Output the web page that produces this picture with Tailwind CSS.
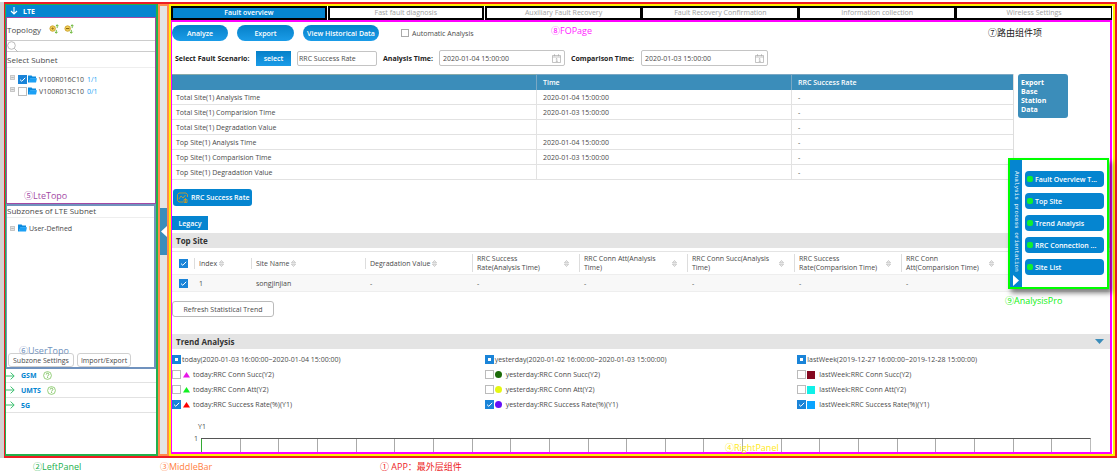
<!DOCTYPE html>
<html lang="en">
<head>
<meta charset="utf-8">
<title>Fault overview</title>
<script src="https://cdn.jsdelivr.net/npm/@tailwindcss/browser@4"></script>
</head>
<body class="bg-white font-['Open_Sans','Noto_Sans_CJK_SC',sans-serif] text-[7px] leading-[9px] text-[#4a4a4a]">
<svg class="hidden">
  <symbol id="check" viewBox="0 0 9 9"><path d="M2 4.6 3.8 6.3 7.2 2.8" fill="none" stroke="#fff" stroke-width="1"/></symbol>
  <symbol id="folder" viewBox="0 0 9 8"><path d="M0 .5h3.600l.8 1H8v2H2.400L.8 7.500H0z" fill="#0b8ade"/><path d="M2.200 3.200H9L8 7.600H.7z" fill="#1ba0f5"/></symbol>
  <symbol id="plus" viewBox="0 0 6 6"><path d="M.5.5h5v5h-5z" fill="#e4e4e4" stroke="#aaa" stroke-width=".8"/><path d="M1.500 3h3" stroke="#999" stroke-width=".7"/></symbol>
  <symbol id="sort" viewBox="0 0 5 7"><path d="M.4 2.8 2.5.5l2.1 2.3zM.4 4.2l2.1 2.3 2.1-2.3z" fill="#eee" stroke="#b0b0b0" stroke-width=".6"/></symbol>
  <symbol id="cal" viewBox="0 0 9 9"><path d="M.5 1.5h8v7h-8zM.5 3h8M2.5.2v2M6.5.2v2M3.8 5l1-.6v3M3.8 7.4h2" fill="none" stroke="#aaa" stroke-width=".7"/></symbol>
  <symbol id="arrow" viewBox="0 0 9 8"><path d="M0 4h8M4.6.6 8.2 4 4.6 7.4" fill="none" stroke="#3cc070" stroke-width="1"/></symbol>
  <symbol id="help" viewBox="0 0 9 9"><circle cx="4.5" cy="4.5" r="3.9" fill="#fff" stroke="#7cc45c" stroke-width=".8"/><path d="M3.2 3.5c0-1.7 2.7-1.7 2.7 0 0 .9-1.3.9-1.3 2M4.6 6.1v.9" fill="none" stroke="#6db84c" stroke-width=".9"/></symbol>
  <symbol id="tri" viewBox="0 0 7 6"><path d="M3.5 0 7 5.5H0z" fill="currentColor"/></symbol>
</svg>
<div class="relative">
  <div class="flex pt-[2px]">
    <div class="w-[4px] shrink-0 bg-[#d4d2d2]"></div>
    <div class="mr-px flex min-w-0 flex-1 border-2 border-l border-[#ed1c24]">

      <aside class="flex w-[153px] shrink-0 flex-col border border-r-2 border-b-2 border-[#22b14c]">
        <h2 class="flex h-[12px] items-center gap-[5px] bg-[#0585d0] pl-[4px] text-[7px] font-bold text-white">
          <svg class="size-[8px]" viewBox="0 0 8 8"><path d="M4 0v7M1 4l3 3 3-3" fill="none" stroke="#fff" stroke-width="1.1"/></svg>LTE</h2>
        <section class="flex h-[187px] flex-col border border-[#a349a4]">
          <div class="flex h-[22px] items-center text-[8px]">
            <span class="mr-[8px]">Topology</span>
            <button aria-label="Expand all" class="mr-[5px]"><svg class="size-[10px]" viewBox="0 0 11 11"><circle cx="4" cy="5" r="3" fill="#f4d15a" stroke="#c9a02c"/><path d="M2.500 5h3M4 3.500v3" stroke="#8a6410" stroke-width=".7"/><path d="M9 4.500V1M7.500 2.400 9 .8l1.500 1.600M8 6.500V10M6.500 8.600 8 10.200l1.500-1.600" fill="none" stroke="#63b32e" stroke-width="1"/></svg></button>
            <button aria-label="Collapse all"><svg class="size-[10px]" viewBox="0 0 11 11"><circle cx="4" cy="5" r="3" fill="#f4d15a" stroke="#c9a02c"/><path d="M2.200 5h3.600" stroke="#8a6410" stroke-width="1.200"/><path d="M9 4.500V1M7.500 2.400 9 .8l1.500 1.600M8 6.500V10M6.500 8.600 8 10.200l1.500-1.600" fill="none" stroke="#63b32e" stroke-width="1"/></svg></button>
          </div>
          <label class="flex h-[12px] items-center border-y border-[#ccc]">
            <svg class="size-[11px] shrink-0" viewBox="0 0 11 11"><circle cx="4.500" cy="4.500" r="3.800" fill="none" stroke="#aaa" stroke-width=".8"/><path d="m7.300 7.300 3.400 3.400" stroke="#aaa" stroke-width=".8"/></svg>
            <input aria-label="Search" class="h-full min-w-0 flex-1 outline-none">
          </label>
          <h3 class="flex h-[16px] items-center border-b border-[#eee] text-[8px]">Select Subnet</h3>
          <ul class="mt-[5px]">
            <li class="flex h-[12px] items-center"><svg class="mx-[3px] mb-[3px] size-[5px]"><use href="#plus"/></svg><label class="flex items-center gap-px"><span class="grid"><input type="checkbox" checked class="col-start-1 row-start-1 size-[9px] appearance-none bg-[#1a84d8]"><svg class="pointer-events-none col-start-1 row-start-1 size-[9px]"><use href="#check"/></svg></span><svg class="mr-px h-[8px] w-[9px]"><use href="#folder"/></svg>V100R016C10</label><span class="ml-[3px] text-[#1ba0f5]">1/1</span></li>
            <li class="flex h-[12px] items-center"><svg class="mx-[3px] mb-[3px] size-[5px]"><use href="#plus"/></svg><label class="flex items-center gap-px"><input type="checkbox" class="size-[9px] appearance-none border border-[#bbb] bg-white"><svg class="mr-px h-[8px] w-[9px]"><use href="#folder"/></svg>V100R013C10</label><span class="ml-[3px] text-[#1ba0f5]">0/1</span></li>
          </ul>
        </section>
        <section class="flex h-[165px] flex-col border-2 border-l border-[#7092be]">
          <h3 class="flex h-[12px] items-start border-b border-[#eee] text-[8px]">Subzones of LTE Subnet</h3>
          <div class="mt-[4px] flex h-[12px] items-center"><svg class="mr-[3px] ml-[3px] size-[5px]"><use href="#plus"/></svg><svg class="mr-[2px] h-[8px] w-[9px]"><use href="#folder"/></svg>User-Defined</div>
          <div class="mt-auto flex gap-[3px] pl-px">
            <button class="h-[14px] rounded-[3px] border border-[#d0d0d0] px-[4px]">Subzone Settings</button>
            <button class="h-[14px] rounded-[3px] border border-[#d0d0d0] px-[3px]">Import/Export</button>
          </div>
        </section>
        <nav class="font-bold text-[#0585d0]">
          <a href="#" class="flex h-[14px] items-center border-b border-[#e2e2e2]"><svg class="mr-[6px] h-[8px] w-[9px]"><use href="#arrow"/></svg>GSM<svg class="ml-[6px] size-[9px]"><use href="#help"/></svg></a>
          <a href="#" class="flex h-[15px] items-center border-b border-[#e2e2e2]"><svg class="mr-[6px] h-[8px] w-[9px]"><use href="#arrow"/></svg>UMTS<svg class="ml-[6px] size-[9px]"><use href="#help"/></svg></a>
          <a href="#" class="flex h-[15px] items-center border-b border-[#e2e2e2]"><svg class="mr-[6px] h-[8px] w-[9px]"><use href="#arrow"/></svg>5G</a>
        </nav>
      </aside>

      <div class="flex w-[11px] shrink-0 flex-col border-2 border-[#ff8a4a] bg-[#e4e4e4] pt-[202px]">
        <button aria-label="Collapse panel" class="flex h-[47px] items-center justify-center bg-[#3b8dba]"><svg class="h-[11px] w-[6px]" viewBox="0 0 6 11"><path d="M6 0v11L0 5.500z" fill="#fff"/></svg></button>
      </div>

      <main class="min-w-0 flex-1 border-2 border-[#fff200] pr-px">
        <nav class="grid h-[14px] grid-cols-6 text-center leading-[10px] text-[#a0a0a0]">
          <a href="#" class="mr-px border-2 border-black bg-[#0585d0] font-semibold text-white">Fault overview</a>
          <a href="#" class="mr-px border-2 border-black">Fast fault diagnosis</a>
          <a href="#" class="border-2 border-r border-black">Auxiliary Fault Recovery</a>
          <a href="#" class="border-2 border-r border-black">Fault Recovery Confirmation</a>
          <a href="#" class="border-2 border-r border-black">Information collection</a>
          <a href="#" class="border-2 border-r border-black">Wireless Settings</a>
        </nav>
        <div class="border-2 border-l border-[#ff00ff]">
          <div class="flex items-center pt-[3px] font-semibold text-white">
            <button class="mr-[9px] h-[16px] w-[56px] rounded-full bg-linear-to-b from-[#0580c8] to-[#1a9ce8]">Analyze</button>
            <button class="mr-[9px] h-[16px] w-[57px] rounded-full bg-linear-to-b from-[#0580c8] to-[#1a9ce8]">Export</button>
            <button class="mr-[22px] h-[16px] w-[76px] rounded-full bg-linear-to-b from-[#0580c8] to-[#1a9ce8]">View Historical Data</button>
            <label class="flex items-center gap-[3px] font-normal text-[#4a4a4a]"><input type="checkbox" class="size-[8px] appearance-none border border-[#aaa]">Automatic Analysis</label>
          </div>
          <div class="mt-[9px] flex items-center">
            <label for="scenario" class="w-[84px] pl-[3px] font-bold text-[#222]">Select Fault Scenario:</label>
            <button class="mr-[6px] h-[15px] w-[35px] bg-linear-to-b from-[#0580c8] to-[#1a9ce8] font-semibold text-white">select</button>
            <input id="scenario" value="RRC Success Rate" class="mr-[6px] h-[15px] w-[80px] rounded-[2px] border border-[#c4c4c4] px-px">
            <label for="at" class="w-[56px] font-bold text-[#222]">Analysis Time:</label>
            <span class="mr-[6px] flex h-[16px] w-[126px] items-center rounded-[2px] border border-[#c4c4c4] px-[3px]"><input id="at" value="2020-01-04 15:00:00" class="min-w-0 flex-1"><svg class="size-[9px]"><use href="#cal"/></svg></span>
            <label for="ct" class="w-[70px] font-bold text-[#222]">Comparison Time:</label>
            <span class="flex h-[16px] w-[127px] items-center rounded-[2px] border border-[#c4c4c4] px-[3px]"><input id="ct" value="2020-01-03 15:00:00" class="min-w-0 flex-1"><svg class="size-[9px]"><use href="#cal"/></svg></span>
          </div>
          <div class="mt-[8px] mr-[42px] flex items-start gap-[4px]">
            <table class="min-w-0 flex-1 table-fixed border-separate border-spacing-0 border-r border-[#ddd] text-left">
              <colgroup><col class="w-[364px]"><col class="w-[255px]"><col></colgroup>
              <thead><tr class="h-[16px] bg-[#3b8dba] font-semibold text-white"><th class="border-t border-[#8aa]"></th><th class="border-t border-l border-[#7aa8c4] pl-[6px] font-semibold">Time</th><th class="border-t border-l border-[#7aa8c4] pl-[6px] font-semibold">RRC Success Rate</th></tr></thead>
              <tbody class="[&_td]:h-[15px] [&_td]:border-b [&_td]:border-[#e2e2e2] [&_td]:p-0 [&_td]:pl-[6px] [&_td:first-child]:pl-[4px] [&_td+td]:border-l">
                <tr><td>Total Site(1) Analysis Time</td><td>2020-01-04 15:00:00</td><td>-</td></tr>
                <tr><td>Total Site(1) Comparision Time</td><td>2020-01-03 15:00:00</td><td>-</td></tr>
                <tr><td>Total Site(1) Degradation Value</td><td></td><td>-</td></tr>
                <tr><td>Top Site(1) Analysis Time</td><td>2020-01-04 15:00:00</td><td>-</td></tr>
                <tr><td>Top Site(1) Comparision Time</td><td>2020-01-03 15:00:00</td><td>-</td></tr>
                <tr><td>Top Site(1) Degradation Value</td><td></td><td>-</td></tr>
              </tbody>
            </table>
            <button class="h-[44px] w-[50px] rounded-[3px] bg-[#3b8dba] pr-[16px] pl-[3px] text-left font-bold text-white">Export Base Station Data</button>
          </div>
          <button class="mt-[9px] ml-px flex h-[17px] w-[79px] items-center gap-[3px] rounded-[3px] bg-[#0585d0] pl-[4px] font-semibold whitespace-nowrap text-white"><svg class="size-[11px] shrink-0" viewBox="0 0 11 11"><path d="M6 10H2L.5 8.500v-6L2 1h7l1.500 1.500V5M2 7l2-3 2 2 2.500-3M7 7.500h3v3H7zM8.500 6v4.500" fill="none" stroke="#c99a2c" stroke-width=".9"/></svg>RRC Success Rate</button>
          <button class="mt-[10px] block h-[14px] w-[36px] bg-[#0585d0] font-semibold text-white">Legacy</button>
          <h3 class="mt-[3px] flex h-[15px] items-center bg-[#e4e4e4] pl-[4px] text-[8px] font-bold text-[#333]">Top Site</h3>
          <table class="mt-[3px] w-full table-fixed border-separate border-spacing-0 border-t border-[#e4e4e4] text-left [&_td]:p-0 [&_td]:pl-[5px] [&_th]:p-0 [&_th]:font-normal">
            <colgroup><col class="w-[22px]"><col class="w-[57px]"><col class="w-[114px]"><col class="w-[107px]"><col class="w-[107px]"><col class="w-[108px]"><col class="w-[107px]"><col class="w-[107px]"><col class="w-[107px]"><col></colgroup>
            <thead><tr class="h-[22px]">
              <th><span class="ml-[7px] grid size-[9px]"><input aria-label="Select all sites" type="checkbox" checked class="col-start-1 row-start-1 size-[9px] appearance-none bg-[#1a84d8]"><svg class="pointer-events-none col-start-1 row-start-1 size-[9px]"><use href="#check"/></svg></span></th>
              <th><span class="flex h-[11px] items-center gap-[2px] border-l border-[#ddd] pl-[4px]">Index<svg class="h-[7px] w-[5px]"><use href="#sort"/></svg></span></th>
              <th><span class="flex h-[11px] items-center gap-[2px] border-l border-[#ddd] pl-[4px]">Site Name<svg class="h-[7px] w-[5px]"><use href="#sort"/></svg></span></th>
              <th><span class="flex h-[11px] items-center gap-[2px] border-l border-[#ddd] pl-[4px]">Degradation Value<svg class="h-[7px] w-[5px]"><use href="#sort"/></svg></span></th>
              <th><span class="flex items-center justify-between border-l border-[#ddd] pr-[10px] pl-[4px]"><span>RRC Success<br>Rate(Analysis Time)</span><svg class="h-[7px] w-[5px]"><use href="#sort"/></svg></span></th>
              <th><span class="flex items-center justify-between border-l border-[#ddd] pr-[10px] pl-[4px]"><span>RRC Conn Att(Analysis<br>Time)</span><svg class="h-[7px] w-[5px]"><use href="#sort"/></svg></span></th>
              <th><span class="flex items-center justify-between border-l border-[#ddd] pr-[10px] pl-[4px]"><span>RRC Conn Succ(Analysis<br>Time)</span><svg class="h-[7px] w-[5px]"><use href="#sort"/></svg></span></th>
              <th><span class="flex items-center justify-between border-l border-[#ddd] pr-[10px] pl-[4px]"><span>RRC Success<br>Rate(Comparision Time)</span><svg class="h-[7px] w-[5px]"><use href="#sort"/></svg></span></th>
              <th><span class="flex items-center justify-between border-l border-[#ddd] pr-[14px] pl-[4px]"><span>RRC Conn<br>Att(Comparision Time)</span><svg class="h-[7px] w-[5px]"><use href="#sort"/></svg></span></th>
              <th></th>
            </tr></thead>
            <tbody><tr class="h-[18px] bg-[#f8f8f8] [&_td]:border-y [&_td]:border-[#eee]">
              <td><span class="ml-[2px] grid size-[9px]"><input aria-label="Select site 1" type="checkbox" checked class="col-start-1 row-start-1 size-[9px] appearance-none bg-[#1a84d8]"><svg class="pointer-events-none col-start-1 row-start-1 size-[9px]"><use href="#check"/></svg></span></td>
              <td>1</td><td>songjinjian</td><td>-</td><td>-</td><td>-</td><td>-</td><td>-</td><td>-</td><td></td>
            </tr></tbody>
          </table>
          <button class="mt-[9px] block h-[16px] w-[102px] rounded-[3px] border border-[#bbb]">Refresh Statistical Trend</button>
          <h3 class="mt-[17px] flex h-[15px] items-center justify-between bg-[#e4e4e4] pr-[6px] pl-[4px] text-[8px] font-bold text-[#333]">Trend Analysis<svg class="h-[5px] w-[9px]" viewBox="0 0 9 5"><path d="M0 0h9L4.500 5z" fill="#3b8dba"/></svg></h3>
          <div class="mt-[3px] grid grid-cols-3 [&_label]:flex [&_label]:h-[15px] [&_label]:items-center">
            <div>
              <label><input type="checkbox" class="mr-px size-[9px] appearance-none border-3 border-[#1a84d8]">today(2020-01-03 16:00:00~2020-01-04 15:00:00)</label>
              <label><input type="checkbox" class="mr-[2px] size-[9px] appearance-none border border-[#bbb]"><svg class="mr-[3px] h-[6px] w-[7px] text-[#e815e8]"><use href="#tri"/></svg>today:RRC Conn Succ(Y2)</label>
              <label><input type="checkbox" class="mr-[2px] size-[9px] appearance-none border border-[#bbb]"><svg class="mr-[3px] h-[6px] w-[7px] text-[#10f020]"><use href="#tri"/></svg>today:RRC Conn Att(Y2)</label>
              <label><span class="mr-[2px] grid"><input type="checkbox" checked class="col-start-1 row-start-1 size-[9px] appearance-none bg-[#1a84d8]"><svg class="pointer-events-none col-start-1 row-start-1 size-[9px]"><use href="#check"/></svg></span><svg class="mr-[3px] h-[6px] w-[7px] text-[#ff0000]"><use href="#tri"/></svg>today:RRC Success Rate(%)(Y1)</label>
            </div>
            <div>
              <label><input type="checkbox" class="mr-px size-[9px] appearance-none border-3 border-[#1a84d8]">yesterday(2020-01-02 16:00:00~2020-01-03 15:00:00)</label>
              <label><input type="checkbox" class="mr-px size-[9px] appearance-none border border-[#bbb]"><i class="mr-[4px] size-[7px] rounded-full bg-[#1c6b08]"></i>yesterday:RRC Conn Succ(Y2)</label>
              <label><input type="checkbox" class="mr-px size-[9px] appearance-none border border-[#bbb]"><i class="mr-[4px] size-[7px] rounded-full bg-[#e6f712]"></i>yesterday:RRC Conn Att(Y2)</label>
              <label><span class="mr-px grid"><input type="checkbox" checked class="col-start-1 row-start-1 size-[9px] appearance-none bg-[#1a84d8]"><svg class="pointer-events-none col-start-1 row-start-1 size-[9px]"><use href="#check"/></svg></span><i class="mr-[4px] size-[7px] rounded-full bg-[#6610f8]"></i>yesterday:RRC Success Rate(%)(Y1)</label>
            </div>
            <div>
              <label><input type="checkbox" class="mr-px size-[9px] appearance-none border-3 border-[#1a84d8]">lastWeek(2019-12-27 16:00:00~2019-12-28 15:00:00)</label>
              <label><input type="checkbox" class="mr-px size-[9px] appearance-none border border-[#bbb]"><i class="mr-[4px] size-[8px] bg-[#850820]"></i>lastWeek:RRC Conn Succ(Y2)</label>
              <label><input type="checkbox" class="mr-px size-[9px] appearance-none border border-[#bbb]"><i class="mr-[4px] size-[8px] bg-[#10f0e8]"></i>lastWeek:RRC Conn Att(Y2)</label>
              <label><span class="mr-px grid"><input type="checkbox" checked class="col-start-1 row-start-1 size-[9px] appearance-none bg-[#1a84d8]"><svg class="pointer-events-none col-start-1 row-start-1 size-[9px]"><use href="#check"/></svg></span><i class="mr-[4px] size-[8px] bg-[#0aa4ff]"></i>lastWeek:RRC Success Rate(%)(Y1)</label>
            </div>
          </div>
          <div class="mt-[10px] pl-[26px]">Y1</div>
          <div class="mt-[3px] mr-[19px] flex h-[18px]">
            <span class="w-[26px] text-right">1</span>
            <div class="mt-[4px] ml-[3px] grid flex-1 grid-cols-[repeat(23,1fr)] border-t border-r border-t-[#555] border-r-[#bbb] [&>i]:border-l [&>i]:border-[#aaa]">
              <i class="border-[#3a3]!"></i><i></i><i></i><i></i><i></i><i></i><i></i><i></i><i></i><i></i><i></i><i></i><i></i><i></i><i></i><i></i><i></i><i></i><i></i><i></i><i></i><i></i><i></i>
            </div>
          </div>
        </div>
      </main>
    </div>
  </div>

  <section class="absolute top-[158px] right-[9px] flex h-[131px] w-[101px] border-2 border-[#00ff00] bg-white shadow-[3px_4px_5px_rgba(0,0,0,0.5)]">
    <div class="flex w-[12px] flex-col items-center justify-between bg-[#0585d0] pt-[11px] pb-px text-white">
      <span class="font-['Liberation_Mono',monospace] text-[6px] whitespace-nowrap [writing-mode:vertical-rl]">Analysis process orientation</span>
      <svg class="h-[11px] w-[6px]" viewBox="0 0 6 11"><path d="M0 0v11l6-5.500z" fill="#fff"/></svg>
    </div>
    <div class="flex flex-1 flex-col gap-[6px] pt-[11px] pr-[3px] pl-[3px] font-semibold text-white">
      <button class="flex h-[16px] items-center gap-[2px] rounded-[4px] bg-[#0585d0] pl-[2px] whitespace-nowrap"><i class="size-[6px] rounded-[2px] bg-[#10f030]"></i>Fault Overview T...</button>
      <button class="flex h-[16px] items-center gap-[2px] rounded-[4px] bg-[#0585d0] pl-[2px] whitespace-nowrap"><i class="size-[6px] rounded-[2px] bg-[#10f030]"></i>Top Site</button>
      <button class="flex h-[16px] items-center gap-[2px] rounded-[4px] bg-[#0585d0] pl-[2px] whitespace-nowrap"><i class="size-[6px] rounded-[2px] bg-[#10f030]"></i>Trend Analysis</button>
      <button class="flex h-[16px] items-center gap-[2px] rounded-[4px] bg-[#0585d0] pl-[2px] whitespace-nowrap"><i class="size-[6px] rounded-[2px] bg-[#10f030]"></i>RRC Connection ...</button>
      <button class="flex h-[16px] items-center gap-[2px] rounded-[4px] bg-[#0585d0] pl-[2px] whitespace-nowrap"><i class="size-[6px] rounded-[2px] bg-[#10f030]"></i>Site List</button>
    </div>
  </section>

  <div class="text-[9px] leading-[12px] whitespace-nowrap">
    <span class="absolute top-[190px] left-[24px] text-[#a349a4]">⑤LteTopo</span>
    <span class="absolute top-[345px] left-[19px] text-[#7092be]">⑥UserTopo</span>
    <span class="absolute top-[25px] left-[551px] text-[#ff20ff]">⑧FOPage</span>
    <span class="absolute top-[27px] left-[988px] text-[#222]">⑦路由组件项</span>
    <span class="absolute top-[295px] left-[1005px] text-[#10f010]">⑨AnalysisPro</span>
    <span class="absolute top-[442px] left-[725px] text-[#ffe920]">④RightPanel</span>
  </div>
  <footer class="flex pt-[2px] pl-[33px] text-[9px] leading-[13px] whitespace-nowrap">
    <span class="w-[127px] text-[#22b14c]">②LeftPanel</span>
    <span class="w-[220px] text-[#ff7f3f]">③MiddleBar</span>
    <span class="text-[#ed1c24]">① APP：最外层组件</span>
  </footer>
</div>
</body>
</html>
